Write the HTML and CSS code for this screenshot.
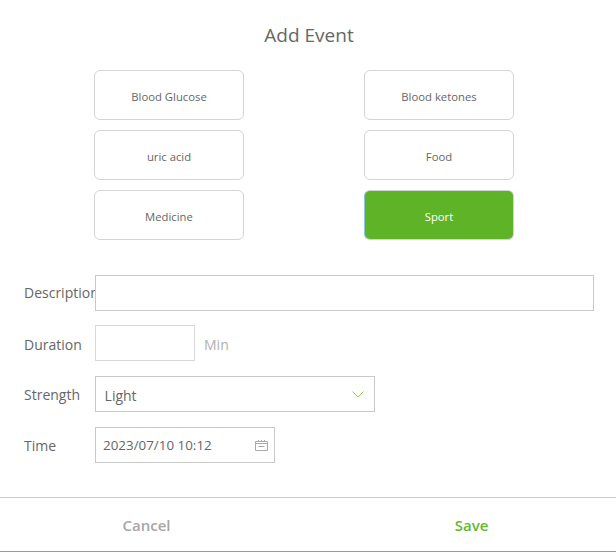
FILE: index.html
```html
<!DOCTYPE html>
<html lang="en">
<head>
    <meta charset="UTF-8">
    <meta name="viewport" content="width=device-width, initial-scale=1.0">
    <title>Add Event</title>
    <link rel="stylesheet" href="styles.css">
</head>
<body>

<div class="dialog">
    <h1 class="title">Add Event</h1>

    <div class="types">
        <div class="type">Blood Glucose</div>
        <div class="type">Blood ketones</div>
        <div class="type">uric acid</div>
        <div class="type">Food</div>
        <div class="type">Medicine</div>
        <div class="type active">Sport</div>
    </div>

    <div class="form">
        <div class="row row-desc">
            <label class="label">Description</label>
            <div class="field field-desc"></div>
        </div>
        <div class="row row-duration">
            <label class="label">Duration</label>
            <div class="field field-duration"></div>
            <span class="unit">Min</span>
        </div>
        <div class="row">
            <label class="label">Strength</label>
            <div class="field field-select">
                <span class="select-value">Light</span>
                <svg class="chevron" width="12" height="7" viewBox="0 0 12 7" fill="none" stroke="#8fd14f" stroke-width="1">
                    <path d="M0.5 0.5 L6 6 L11.5 0.5"/>
                </svg>
            </div>
        </div>
        <div class="row">
            <label class="label">Time</label>
            <div class="field field-time">
                <span>2023/07/10 10:12</span>
                <svg class="calendar" width="13" height="11" viewBox="0 0 13 11" fill="none" stroke="#aaa" stroke-width="1">
                    <path d="M0.5 1.5 H12.5 V10.5 H0.5 Z"/>
                    <path d="M0.5 3.5 H12.5"/>
                    <path d="M3.5 0 V1.5 M6.5 0 V1.5 M9.5 0 V1.5"/>
                    <path d="M3.5 6.5 H9.5"/>
                </svg>
            </div>
        </div>
    </div>

    <div class="footer">
        <div class="action cancel">Cancel</div>
        <div class="action save">Save</div>
    </div>
</div>

</body>
</html>
```

FILE: styles.css
```css
body {
    margin: 0;
    padding: 0;
    background-color: #fff;
    font-family: "Open Sans", "Noto Sans", sans-serif;
    color: #666;
}
.dialog {
    height: 552px;
    box-sizing: border-box;
    border-bottom: 1px solid #999;
    overflow: hidden;
}
.title {
    margin: 0;
    height: 70px;
    padding: 21px 0 0 2px;
    box-sizing: border-box;
    font-size: 19px;
    line-height: 28px;
    font-weight: 400;
    text-align: center;
    color: #666;
}
.types {
    display: grid;
    grid-template-columns: 150px 150px;
    grid-auto-rows: 50px;
    column-gap: 120px;
    row-gap: 10px;
    padding-left: 94px;
}
.type {
    box-sizing: border-box;
    border: 1px solid #d4d4d4;
    border-radius: 6px;
    padding-top: 2px;
    display: flex;
    align-items: center;
    justify-content: center;
    font-size: 11.3px;
    color: #666;
}
.type.active {
    background-color: #5fb327;
    color: #fff;
    font-weight: 500;
    border-left-color: #8cc4e8;
}
.form {
    margin-top: 35px;
    padding-left: 24px;
    display: flex;
    flex-direction: column;
    gap: 15px;
}
.row {
    display: flex;
    align-items: center;
    height: 36px;
    font-size: 14px;
}
.row-desc {
    margin-bottom: -1px;
}
.label {
    width: 71px;
    flex: none;
    overflow: hidden;
    white-space: nowrap;
    color: #666;
}
.row-desc .label {
    padding-bottom: 1px;
}
.row-duration .label, .unit {
    padding-top: 2px;
}
.field {
    box-sizing: border-box;
    height: 36px;
    border: 1px solid #c8c8c8;
    display: flex;
    align-items: center;
    justify-content: space-between;
}
.field-desc {
    width: 499px;
}
.field-duration {
    width: 100px;
    border-color: #d8d8d8;
}
.unit {
    margin-left: 9px;
    color: #b0b0b0;
}
.field-select {
    width: 280px;
    padding: 0 10px 0 8.6px;
}
.select-value {
    padding-top: 2px;
}
.field-time {
    width: 180px;
    padding: 0 6px 0 7px;
    font-size: 13.4px;
}
.footer {
    margin-top: 34px;
    height: 54px;
    border-top: 1px solid #c8c8c8;
    display: flex;
    justify-content: center;
    gap: 175px;
    padding-left: 2px;
}
.action {
    width: 150px;
    line-height: 54px;
    text-align: center;
    font-size: 15px;
    font-weight: 600;
}
.cancel {
    color: #a6a6a6;
}
.save {
    color: #62b92f;
}
```
